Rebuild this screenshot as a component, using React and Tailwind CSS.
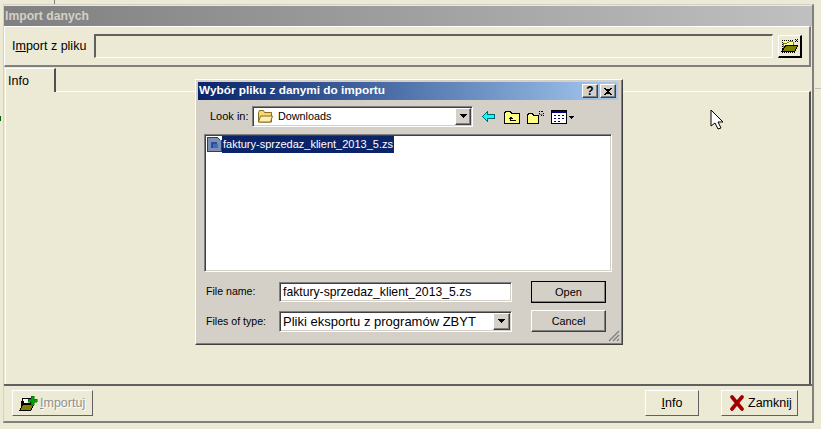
const raised =
  "border border-t-white border-l-white border-b-[#404040] border-r-[#404040] shadow-[inset_-1px_-1px_0_#808080]";
const sunken =
  "border border-t-[#808080] border-l-[#808080] border-b-white border-r-white shadow-[inset_1px_1px_0_#404040,inset_-1px_-1px_0_#d4d0c8]";

function BrowseIcon() {
  return (
    <svg width="18" height="16" viewBox="0 0 18 16" shapeRendering="crispEdges">
      <path d="M1 2h12M1 2v12M1 14h14" stroke="#000" strokeDasharray="1 1" fill="none" />
      <path d="M3 3h8v2H3z" fill="#ffff66" />
      <path d="M2 5h4l3-2 3 1v3H5l-3 5z" fill="#ffff99" stroke="#000" strokeWidth="0.5" />
      <path d="M5 7h12l-3 6H1z" fill="#808000" stroke="#000" />
      <path d="M14 1l3 3M17 1l-3 3" stroke="#000" />
    </svg>
  );
}

function ImportIcon() {
  return (
    <svg width="19" height="17" viewBox="0 0 19 17" shapeRendering="crispEdges">
      <path d="M3 3h8v5H3z" fill="#fff" stroke="#000" />
      <path d="M2 8h2v-2M2 6v8" stroke="#000" fill="none" />
      <path d="M4 9h11l-3 6H1z" fill="#808000" stroke="#000" />
      <path d="M12 1h3v3h3v3h-3v3h-3V7H9V4h3z" fill="#00a000" stroke="#006000" strokeWidth="0.5" />
    </svg>
  );
}

function CloseIcon() {
  return (
    <svg width="16" height="16" viewBox="0 0 16 16">
      <path d="M3 2l10 12M13 2L3 14" stroke="#a00000" strokeWidth="3.6" strokeLinecap="round" />
    </svg>
  );
}

function FolderOpen() {
  return (
    <svg width="17" height="15" viewBox="0 0 17 15">
      <path d="M1.5 3.5l1-2h4l1 2h7v9.5h-13z" fill="#f7d774" stroke="#8a6d1a" />
      <path d="M1.5 13l2-6h12l-2 6z" fill="#fdeeb0" stroke="#8a6d1a" />
    </svg>
  );
}

function BackArrow() {
  return (
    <svg width="13" height="11" viewBox="0 0 13 11" shapeRendering="crispEdges">
      <path d="M5.5.5L.5 5.5l5 5v-3h7v-4h-7z" fill="#00ffff" stroke="#006666" />
    </svg>
  );
}

function UpFolder() {
  return (
    <svg width="16" height="14" viewBox="0 0 16 14" shapeRendering="crispEdges">
      <path d="M.5 3.5l1-2h5l1 2h8v10H.5z" fill="#ffff80" stroke="#000" />
      <path d="M7 6L4 9h2v2h6v-1H7V9h2z" fill="#000" />
    </svg>
  );
}

function NewFolder() {
  return (
    <svg width="17" height="14" viewBox="0 0 17 14" shapeRendering="crispEdges">
      <path d="M.5 5.5l1-2h4l1 2h5v8H.5z" fill="#ffff80" stroke="#000" />
      <path d="M12 3h1M14 1v1M14 5v1M16 3h1M12 1h1M16 5h1M15 1h1" stroke="#000" />
      <path d="M12 4h4" stroke="#808080" />
    </svg>
  );
}

function ViewMenu() {
  return (
    <svg width="24" height="14" viewBox="0 0 24 14" shapeRendering="crispEdges">
      <path d="M.5.5h15v13H.5z" fill="#fff" stroke="#000" />
      <path d="M1 1h14v2H1z" fill="#000080" />
      <path d="M3 5h2v1H3zM7 5h2v1H7zM11 5h2v1h-2zM3 8h2v1H3zM7 8h2v1H7zM11 8h2v1h-2zM3 11h2v1H3zM7 11h2v1H7z" fill="#000080" />
      <path d="M18 6h5l-2.5 3z" fill="#000" />
    </svg>
  );
}

function FileIcon() {
  return (
    <svg width="15" height="15" viewBox="0 0 15 15" shapeRendering="crispEdges">
      <path d="M.5.5h10l4 3v11H.5z" fill="#7d8fb3" stroke="#2e3c66" />
      <path d="M10 0h4v3h-1z" fill="#fff" />
      <path d="M4 5h6v6H4z" fill="#2c4f94" />
      <path d="M6 7h5v4H6z" fill="#3d6cc0" />
    </svg>
  );
}

function DownArrow({ className }) {
  return (
    <div className={"flex items-center justify-center bg-[#d4d0c8] " + raised + " " + className}>
      <svg width="9" height="5" viewBox="0 0 9 5" shapeRendering="crispEdges">
        <path d="M1 0h7v1H1zM2 1h5v1H2zM3 2h3v1H3zM4 3h1v1H4z" fill="#000" />
      </svg>
    </div>
  );
}

function OpenFileDialog() {
  return (
    <div className={"absolute left-[195px] top-[79px] w-[428px] h-[266px] bg-[#d4d0c8] pt-[2px] pl-[2px] pr-[4px] flex flex-col " + raised}>
      <div className="h-[18px] shrink-0 flex items-center justify-between pl-[1px] pr-[2px] bg-gradient-to-r from-[#0a246a] to-[#a6caf0]">
        <span className="text-white font-bold text-[11.8px] leading-none">Wybór pliku z danymi do importu</span>
        <div className="flex gap-[2px]">
          <div className={"w-[16px] h-[14px] bg-[#d4d0c8] flex items-center justify-center text-[12px] font-bold text-black leading-none " + raised}>?</div>
          <div className={"w-[16px] h-[14px] bg-[#d4d0c8] flex items-center justify-center " + raised}>
            <svg width="8" height="7" viewBox="0 0 8 7" shapeRendering="crispEdges">
              <path d="M0 0h2v1h4V0h2v1H7v1H6v1H5v1h1v1h1v1h1v1H6V6H2v1H0V6h1V5h1V4h1V3H2V2H1V1H0z" fill="#000" />
            </svg>
          </div>
        </div>
      </div>

      <div className="h-[21px] shrink-0 mt-[6px] flex items-center pl-[12px]">
        <span className="w-[42px] text-[11px] text-black">Look in:</span>
        <div className={"w-[221px] h-[21px] bg-white flex items-center pl-[4px] gap-[4px] relative " + sunken}>
          <FolderOpen />
          <span className="text-[10.8px] text-black">Downloads</span>
          <DownArrow className="absolute right-[1px] top-[1px] w-[16px] h-[17px]" />
        </div>
        <div className="flex items-center ml-[9px]">
          <BackArrow />
          <span className="w-[9px]" />
          <UpFolder />
          <span className="w-[7px]" />
          <NewFolder />
          <span className="w-[7px]" />
          <ViewMenu />
        </div>
      </div>

      <div className={"ml-[6px] mt-[7px] w-[408px] h-[138px] shrink-0 bg-white pl-[2px] pt-[1px] " + sunken}>
        <div className="flex items-center h-[17px]">
          <FileIcon />
          <span className="px-[1px] h-[17px] flex items-center bg-[#0a246a] text-white text-[11px] whitespace-nowrap w-[172px]">faktury-sprzedaz_klient_2013_5.zs</span>
        </div>
      </div>

      <div className="flex mt-[9px] pl-[8px]">
        <div className="flex flex-col">
          <div className="flex items-center h-[20px] mt-[1px]">
            <span className="w-[73px] text-[10.6px] text-black">File name:</span>
            <div className={"w-[233px] h-[20px] bg-white flex items-center pl-[3px] text-[12.2px] text-black whitespace-nowrap " + sunken}>faktury-sprzedaz_klient_2013_5.zs</div>
          </div>
          <div className="flex items-center h-[21px] mt-[9px]">
            <span className="w-[73px] text-[10.6px] text-black">Files of type:</span>
            <div className={"w-[233px] h-[21px] bg-white flex items-center pl-[3px] text-[13px] text-black whitespace-nowrap relative " + sunken}>
              Pliki eksportu z programów ZBYT
              <DownArrow className="absolute right-[1px] top-[1px] w-[17px] h-[17px]" />
            </div>
          </div>
        </div>
        <div className="flex flex-col ml-[19px] gap-[7px]">
          <div className={"w-[75px] h-[22px] bg-[#d4d0c8] flex items-center justify-center text-[11px] text-black outline outline-1 outline-black -outline-offset-1 " + raised}>Open</div>
          <div className={"w-[75px] h-[22px] bg-[#d4d0c8] flex items-center justify-center text-[10.8px] text-black " + raised}>Cancel</div>
        </div>
      </div>

      <svg className="absolute right-[2px] bottom-[2px]" width="12" height="12" viewBox="0 0 12 12">
        <path d="M11 1L1 11M11 5L5 11M11 9L9 11" stroke="#808080" strokeWidth="1.4" />
      </svg>
    </div>
  );
}

export default function App() {
  return (
    <div className="relative w-[821px] h-[429px] overflow-hidden bg-[#ecead4] font-['Liberation_Sans',Arial,sans-serif]">
      <div className="absolute left-[54px] top-0 w-[1px] h-[4px] bg-[#808080]" />
      <div className="absolute left-[0px] top-[116px] w-[1px] h-[5px] bg-[#006000]" />
      <div className="absolute left-[815px] top-[88px] w-[6px] h-[1px] bg-[#c0c0c0]" />

      <div className="absolute left-[3px] top-[4px] w-[811px] h-[419px] flex flex-col border border-t-[#d4d0c8] border-l-[#d4d0c8] border-b-[#808080] border-r-[#808080] border-r-2 border-b-2">
        <div className="h-[20px] mt-[1px] flex items-center pl-[1px] bg-gradient-to-r from-[#808080] to-[#c0c0c0]">
          <span className="text-[#d4d0c8] font-bold text-[12.2px]">Import danych</span>
        </div>
        <div className="h-[41px] flex items-center pl-[7px] border-t border-t-white border-l border-l-white border-b-2 border-b-[#808080] border-r-2 border-r-[#808080] mr-[1px]">
          <span className="text-[12.5px] text-black w-[82px]">I<span className="underline">m</span>port z pliku</span>
          <div className="w-[679px] h-[24px] border border-t-[#606060] border-l-[#606060] border-b-white border-r-white border-t-2 border-l-2" />
          <div className="ml-[5px] w-[24px] h-[23px] flex items-center justify-center bg-[#ecead4] border border-t-white border-l-white border-b-black border-r-black border-b-2 border-r-2">
            <BrowseIcon />
          </div>
        </div>

        <div className="flex-1 flex flex-col mt-[1px]">
          <div className="h-[23px] flex">
            <div className="w-[51px] ml-[1px] h-[24px] z-10 bg-[#ecead4] border-t border-t-white border-l border-l-white border-r-2 border-r-[#505050] pl-[2px] pt-[3px] text-[12.5px] text-black">Info</div>
          </div>
          <div className="flex-1 mr-[1px] ml-[1px] border-t border-t-white border-l border-l-white border-r-2 border-r-[#505050]" />
        </div>

        <div className="h-[37px] flex items-start pt-[4px] border-t-2 border-t-[#606060] pl-[8px]">
          <div className="w-[81px] h-[26px] flex items-center pl-[6px] gap-[2px] bg-[#ecead4] border border-t-white border-l-white border-b-[#606060] border-r-[#606060] text-[12.5px] text-[#909090]">
            <ImportIcon />
            <span className="[text-shadow:1px_1px_0_#fff]"><span className="underline">I</span>mportuj</span>
          </div>
          <div className="w-[54px] h-[26px] ml-[552px] flex items-center justify-center bg-[#ecead4] border border-t-white border-l-white border-b-[#606060] border-r-[#606060] text-[12.5px] text-black">
            <span><span className="underline">I</span>nfo</span>
          </div>
          <div className="w-[77px] h-[26px] ml-[22px] flex items-center pl-[7px] gap-[3px] bg-[#ecead4] border border-t-white border-l-white border-b-[#606060] border-r-[#606060] text-[12.5px] text-black">
            <CloseIcon />
            <span>Zamknij</span>
          </div>
        </div>
      </div>

      <OpenFileDialog />

      <svg className="absolute left-[710px] top-[109px]" width="14" height="21" viewBox="0 0 14 21">
        <path d="M1 1v16l4-3 3 6 3-1-3-6h5z" fill="#fff" stroke="#000" />
      </svg>
    </div>
  );
}
